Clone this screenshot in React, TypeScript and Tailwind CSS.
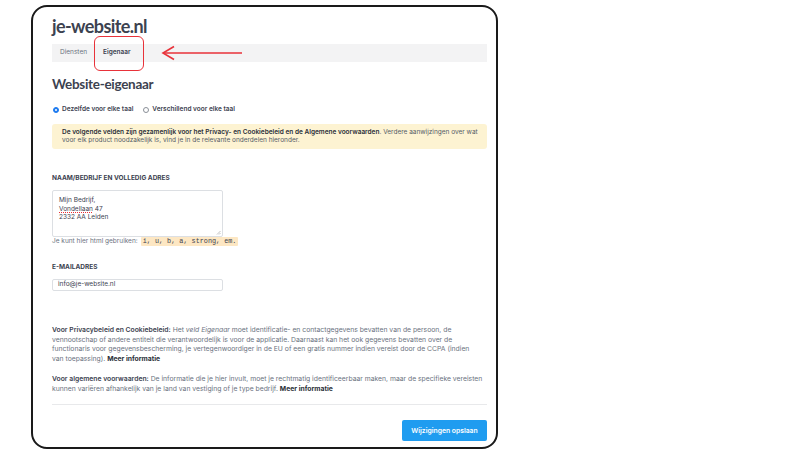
const sans = "font-['Inter','Noto_Sans',sans-serif]";
const head = "font-['Lato','Noto_Sans',sans-serif]";

export default function App() {
  return (
    <div className={`w-[800px] h-[450px] bg-white overflow-hidden ${sans}`}>
      <div className="ml-[31px] mt-[5px] w-[467px] h-[444px] border-2 border-[#1a1a1a] rounded-[16px] pl-[19px] pr-[9px] text-[#3c4250]">
        <h1 className={`${head} mt-[7px] text-[18px] leading-[24px] font-bold tracking-[-0.6px] text-[#3c4250]`}>
          je-website.nl
        </h1>

        {/* tabs */}
        <div className="relative mt-[6px] h-[18px] bg-[#f3f3f4] flex items-center text-[6.5px]">
          <span className="ml-[8px] text-[#6b7280]">Diensten</span>
          <span className="ml-[16px] font-semibold text-[#3c4250]">Eigenaar</span>
          <div className="absolute left-[42px] top-[-8px] w-[50px] h-[35px] border-[1.5px] border-[#e8323a] rounded-[6px]" />
          <svg className="absolute left-[109px] top-[1px]" width="82" height="16" viewBox="0 0 82 16">
            <path d="M2 8 H81" stroke="#e8323a" strokeWidth="1.6" fill="none" />
            <path d="M13 1.5 L2 8 L13 14.5" stroke="#e8323a" strokeWidth="1.6" fill="none" strokeLinejoin="miter" />
          </svg>
        </div>

        <h2 className={`${head} mt-[13px] text-[13.5px] leading-[18px] font-bold tracking-[-0.3px] text-[#3c4250]`}>
          Website-eigenaar
        </h2>

        {/* radios */}
        <div className="mt-[11px] flex items-center text-[6.5px] text-[#3c4250] h-[12px]">
          <span className="ml-[1px] w-[6px] h-[6px] rounded-full bg-[#1e7bf0] border border-[#1e7bf0] flex items-center justify-center">
            <span className="w-[2px] h-[2px] rounded-full bg-white" />
          </span>
          <span className="ml-[3px] font-semibold">Dezelfde voor elke taal</span>
          <span className="ml-[10px] w-[6px] h-[6px] rounded-full border border-[#8a8f98] bg-white" />
          <span className="ml-[3px] font-semibold">Verschillend voor elke taal</span>
        </div>

        {/* notice */}
        <div className="mt-[8px] h-[25px] bg-[#fdf3d2] rounded-[3px] pl-[10px] pt-[5px] text-[6.5px] leading-[7.5px] text-[#555b66]">
          <div className="whitespace-nowrap">
            <span className="font-semibold text-[#2a2f38]">
              De volgende velden zijn gezamenlijk voor het Privacy- en Cookiebeleid en de Algemene voorwaarden
            </span>
            . Verdere aanwijzingen over wat
          </div>
          <div className="whitespace-nowrap">
            voor elk product noodzakelijk is, vind je in de relevante onderdelen hieronder.
          </div>
        </div>

        {/* name field */}
        <div className="mt-[25px] text-[6.5px] leading-[9px] font-bold text-[#3c4250] uppercase">
          Naam/bedrijf en volledig adres
        </div>
        <div className="relative mt-[7px] w-[171px] h-[47px] border border-[#dcdfe3] rounded-[2px] pl-[6px] pt-[5px] text-[6.5px] leading-[8.5px] text-[#3c4250]">
          <div>Mijn Bedrijf,</div>
          <div>
            <span className="underline decoration-dotted decoration-[#e8323a] underline-offset-[1px]">Vondellaan</span> 47
          </div>
          <div>2332 AA Leiden</div>
          <svg className="absolute right-[1px] bottom-[1px]" width="5" height="5" viewBox="0 0 5 5">
            <path d="M1 4.5 L4.5 1 M3 4.5 L4.5 3" stroke="#999" strokeWidth="0.6" />
          </svg>
        </div>
        <div className="flex items-center text-[6.5px] leading-[9px] text-[#6b7280]">
          <span>Je kunt hier html gebruiken:</span>
          <span className="ml-[3px] px-[2px] bg-[#fde7c3] rounded-[1px] font-['Liberation_Mono','DejaVu_Sans_Mono',monospace] text-[6.8px] text-[#3c4250]">
            i, u, b, a, strong, em.
          </span>
        </div>

        {/* email */}
        <div className="mt-[17px] text-[6.5px] leading-[9px] font-bold text-[#3c4250] uppercase">E-mailadres</div>
        <div className="mt-[7px] w-[171px] h-[12px] border border-[#dcdfe3] rounded-[2px] pl-[5px] flex items-center text-[6.5px] text-[#3c4250]">
          info@je-website.nl
        </div>

        {/* info paragraphs */}
        <div className="mt-[34px] text-[6.8px] leading-[9.7px] text-[#6b7280] whitespace-nowrap">
          <div>
            <span className="font-semibold text-[#3c4250]">Voor Privacybeleid en Cookiebeleid:</span> Het{" "}
            <i>veld Eigenaar</i> moet identificatie- en contactgegevens bevatten van de persoon, de
          </div>
          <div>
            vennootschap of andere entiteit die verantwoordelijk is voor de applicatie. Daarnaast kan het ook gegevens bevatten over de
          </div>
          <div>
            functionaris voor gegevensbescherming, je vertegenwoordiger in de EU of een gratis nummer indien vereist door de CCPA (indien
          </div>
          <div>
            van toepassing). <span className="font-bold text-[#2a2f38]">Meer informatie</span>
          </div>
        </div>
        <div className="mt-[10px] text-[6.8px] leading-[9.7px] text-[#6b7280] whitespace-nowrap">
          <div>
            <span className="font-semibold text-[#3c4250]">Voor algemene voorwaarden:</span> De informatie die je hier invult, moet je rechtmatig identificeerbaar maken, maar de specifieke vereisten
          </div>
          <div>
            kunnen variëren afhankelijk van je land van vestiging of je type bedrijf.{" "}
            <span className="font-bold text-[#2a2f38]">Meer informatie</span>
          </div>
        </div>

        <div className="mt-[11px] h-px bg-[#e8e9eb]" />

        <div className="mt-[15px] flex justify-end">
          <button className="w-[85px] h-[21px] bg-[#1f9cf0] rounded-[2px] text-white text-[6.8px] font-semibold">
            Wijzigingen opslaan
          </button>
        </div>
      </div>
    </div>
  );
}
